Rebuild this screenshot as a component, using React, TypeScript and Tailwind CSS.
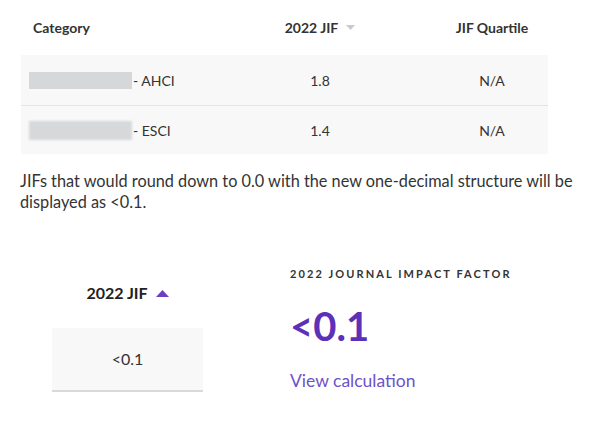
export default function App() {
  return (
    <div className="w-[602px] h-[422px] bg-white overflow-hidden text-[#333] font-['Lato','Noto_Sans',sans-serif]">
      <div className="ml-[21px] w-[527px]">
        <div className="grid grid-cols-[183px_232px_112px] h-[55px] items-center text-[14px] font-bold text-[#333]">
          <div className="pl-[12px]">Category</div>
          <div className="flex items-center justify-center gap-[8px]">
            <span>2022 JIF</span>
            <svg width="9" height="5" viewBox="0 0 9 5">
              <path d="M0 0 L9 0 L4.5 5 Z" fill="#c9c9c9" />
            </svg>
          </div>
          <div className="text-center">JIF Quartile</div>
        </div>
        <div className="grid grid-cols-[183px_232px_112px] h-[51px] items-center bg-[#f8f8f8] border-b border-[#e4e4e4] text-[14px] text-[#333]">
          <div className="pl-[8px] flex items-center gap-[1px]">
            <div className="w-[103px] h-[17px] bg-[#d5d7d9] blur-[0.6px]" />
            <span>- AHCI</span>
          </div>
          <div className="text-center">1.8</div>
          <div className="text-center">N/A</div>
        </div>
        <div className="grid grid-cols-[183px_232px_112px] h-[48px] items-center bg-[#f8f8f8] text-[14px] text-[#333]">
          <div className="pl-[8px] flex items-center gap-[1px]">
            <div className="w-[103px] h-[19px] bg-[#d7d8da] blur-[0.8px]" />
            <span>- ESCI</span>
          </div>
          <div className="text-center">1.4</div>
          <div className="text-center">N/A</div>
        </div>
      </div>

      <p className="mt-[16px] ml-[20px] w-[575px] text-[16.3px] leading-[21px] text-[#333]">
        JIFs that would round down to 0.0 with the new one-decimal structure will be displayed as &lt;0.1.
      </p>

      <div className="mt-[54px] flex items-start">
        <div className="ml-[52px] w-[151px] pt-[15px] flex flex-col">
          <div className="h-[24px] flex items-center justify-center gap-[8px] text-[16px] font-bold text-[#222]">
            <span>2022 JIF</span>
            <svg width="13" height="7" viewBox="0 0 13 7">
              <path d="M0 7 L6.5 0 L13 7 Z" fill="#6a3fc4" />
            </svg>
          </div>
          <div className="mt-[23px] h-[64px] bg-[#f8f8f8] border-b-2 border-[#d9d9d9] flex items-center justify-center text-[16px] text-[#333]">
            &lt;0.1
          </div>
        </div>
        <div className="ml-[87px] flex flex-col">
          <div className="h-[16px] leading-[16px] text-[11px] font-bold tracking-[2.1px] text-[#333]">
            2022 JOURNAL IMPACT FACTOR
          </div>
          <div className="mt-[24px] h-[40px] leading-[40px] text-[40px] font-bold text-[#5c30b8]">
            &lt;0.1
          </div>
          <div className="mt-[23px] h-[24px] leading-[24px] text-[17.5px] text-[#6e52c8]">
            View calculation
          </div>
        </div>
      </div>
    </div>
  );
}
